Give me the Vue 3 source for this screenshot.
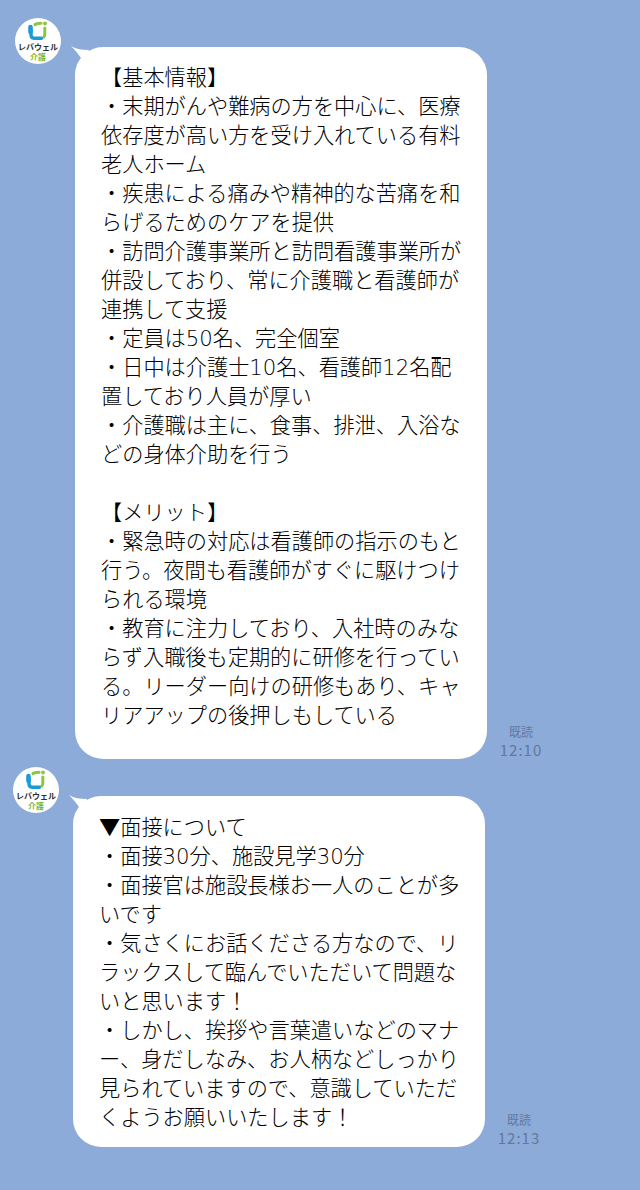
<template>
  <div class="chat">
    <div
      v-for="msg in messages"
      :key="msg.time"
      class="row"
      :class="msg.cls"
    >
      <div class="avatar">
        <svg class="logo-mark" width="20" height="21" viewBox="0 0 20 21" fill="none">
          <path d="M3 9v4.500c0 2.200 1.200 3.700 3 3.700h7.500" stroke="#1c9ad6" stroke-width="3.400" stroke-linecap="round" />
          <path d="M2.500 6v5" stroke="#1c9ad6" stroke-width="4.600" stroke-linecap="round" />
          <path d="M7 3.600 C8 2.600 9 2.300 13 2.300" stroke="#8cc63f" stroke-width="3" stroke-linecap="round" />
          <path d="M16.800 7v6.500c0 1-.4 1.800-1 2.400" stroke="#8cc63f" stroke-width="3" stroke-linecap="round" />
          <circle cx="17" cy="2.500" r="1.900" fill="#8cc63f" />
        </svg>
        <span class="logo-name">レバウェル</span>
        <span class="logo-sub">介護</span>
      </div>
      <div class="bubble">
        <svg class="tail" width="20" height="20" viewBox="0 0 20 20">
          <path d="M0 0 C5 3 11 4 18 4 L14 20 C12 15 9 9 0 0z" fill="#fff" />
        </svg>
        <p class="text">{{ msg.text }}</p>
      </div>
      <div class="meta">
        <span class="read">既読</span>
        <span class="time">{{ msg.time }}</span>
      </div>
    </div>
  </div>
</template>

<script setup>
const messages = [
  {
    cls: "first",
    time: "12:10",
    text: `【基本情報】
・末期がんや難病の方を中心に、医療
依存度が高い方を受け入れている有料
老人ホーム
・疾患による痛みや精神的な苦痛を和
らげるためのケアを提供
・訪問介護事業所と訪問看護事業所が
併設しており、常に介護職と看護師が
連携して支援
・定員は50名、完全個室
・日中は介護士10名、看護師12名配
置しており人員が厚い
・介護職は主に、食事、排泄、入浴な
どの身体介助を行う

【メリット】
・緊急時の対応は看護師の指示のもと
行う。夜間も看護師がすぐに駆けつけ
られる環境
・教育に注力しており、入社時のみな
らず入職後も定期的に研修を行ってい
る。リーダー向けの研修もあり、キャ
リアアップの後押しもしている`,
  },
  {
    cls: "second",
    time: "12:13",
    text: `▼面接について
・面接30分、施設見学30分
・面接官は施設長様お一人のことが多
いです
・気さくにお話くださる方なので、リ
ラックスして臨んでいただいて問題な
いと思います！
・しかし、挨拶や言葉遣いなどのマナ
ー、身だしなみ、お人柄などしっかり
見られていますので、意識していただ
くようお願いいたします！`,
  },
];
</script>

<style>
html,
body {
  background: #8cabd9;
}
</style>

<style scoped>
.chat {
  width: 640px;
  height: 1190px;
  box-sizing: border-box;
  padding-top: 18px;
  background: #8cabd9;
  font-family: "Noto Sans CJK JP", "Noto Sans", sans-serif;
  overflow: hidden;
}
.row {
  display: flex;
  align-items: flex-start;
}
.row.first {
  padding-left: 15px;
  margin-bottom: 8px;
}
.row.second {
  padding-left: 13px;
}
.avatar {
  width: 46px;
  height: 46px;
  flex: none;
  border-radius: 50%;
  background: #fff;
  display: flex;
  flex-direction: column;
  align-items: center;
  box-sizing: border-box;
  padding-top: 3px;
  overflow: hidden;
}
.logo-mark {
  display: block;
  flex: none;
}
.logo-name {
  font-size: 8px;
  line-height: 10px;
  font-weight: 700;
  color: #2e2e2e;
  white-space: nowrap;
}
.logo-sub {
  font-size: 8px;
  line-height: 9px;
  font-weight: 700;
  color: #7cb82f;
}
.bubble {
  position: relative;
  width: 412px;
  flex: none;
  margin-left: 14px;
  margin-top: 29px;
  box-sizing: border-box;
  padding: 16px 10px 29px 26px;
  background: #fff;
  border-radius: 28px;
}
.row.second .bubble {
  padding: 17px 10px 15px 26px;
}
.tail {
  position: absolute;
  left: -4px;
  top: -1px;
}
.text {
  margin: 0;
  font-family: "DejaVu Sans", "Noto Sans CJK JP", sans-serif;
  font-size: 21.200px;
  font-weight: 300;
  line-height: 29px;
  color: #000;
  white-space: pre-line;
}
.meta {
  align-self: flex-end;
  width: 68px;
  flex: none;
  display: flex;
  flex-direction: column;
  align-items: center;
  color: #64789a;
}
.read {
  font-size: 12px;
  line-height: 18px;
}
.time {
  font-size: 15px;
  line-height: 18px;
  letter-spacing: 1px;
}
</style>
